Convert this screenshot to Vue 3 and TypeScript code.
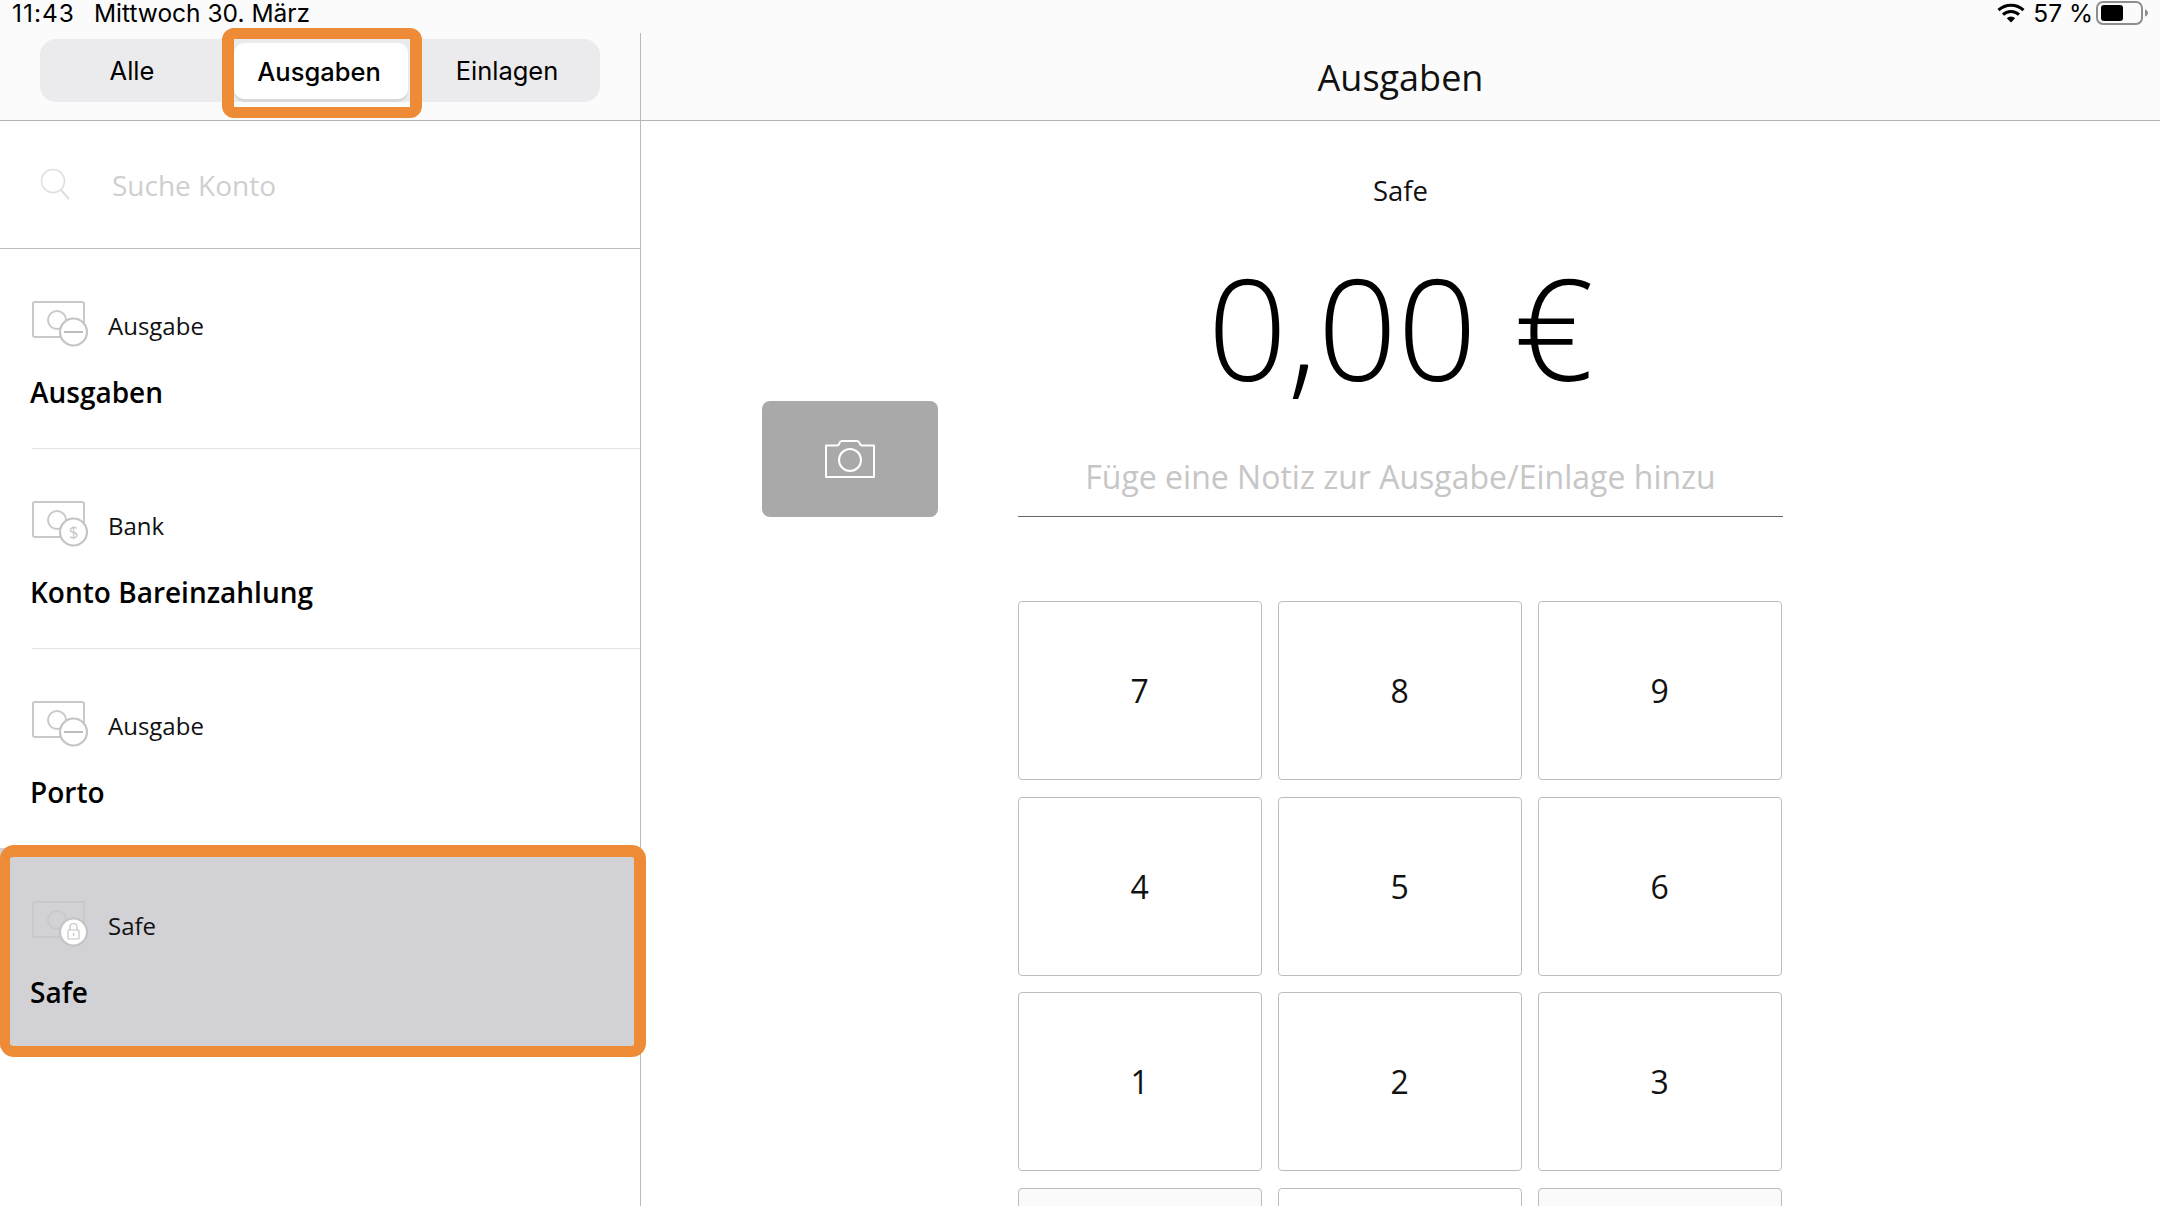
<template>
  <div class="page">
    <header class="status">
      <span class="time">11:43</span>
      <span class="date">Mittwoch 30. März</span>
      <span class="status-right">
        <svg class="wifi" width="28" height="20" viewBox="0 0 28 20">
          <path d="M1.5 7.2a18 18 0 0 1 25 0" fill="none" stroke="#000" stroke-width="3" />
          <path d="M6 11.6a11.6 11.6 0 0 1 16 0" fill="none" stroke="#000" stroke-width="3" />
          <path d="M14 19.6l-4.2-4.4a6 6 0 0 1 8.4 0z" fill="#000" />
        </svg>
        <span class="percent">57 %</span>
        <svg width="54" height="24" viewBox="0 0 54 24">
          <rect x="1" y="1" width="45" height="22" rx="6" fill="none" stroke="#8e8e8e" stroke-width="2" />
          <rect x="5" y="4" width="22" height="16" rx="3" fill="#000" />
          <path d="M49 8.5c2 .6 3 2 3 3.500s-1 2.900-3 3.500z" fill="#8e8e8e" />
        </svg>
      </span>
    </header>

    <div class="columns">
      <aside class="sidebar">
        <div class="sidebar-head">
          <div class="segments">
            <button
              v-for="tab in tabs"
              :key="tab"
              :class="['segment', { active: tab === activeTab }]"
            >
              {{ tab }}
            </button>
          </div>
        </div>

        <div class="search">
          <svg width="32" height="34" viewBox="0 0 32 34">
            <circle cx="13" cy="13" r="11.500" fill="none" stroke="#dedede" stroke-width="1.500" />
            <path d="M21 22l8 9" fill="none" stroke="#dedede" stroke-width="2" />
          </svg>
          <span class="search-text">Suche Konto</span>
        </div>

        <div
          v-for="account in accounts"
          :key="account.title"
          :class="['account', { selected: account.selected }]"
        >
          <div class="account-top">
            <svg class="account-icon" width="60" height="52" viewBox="0 -1 60 52">
              <rect x="3" y="2" width="51" height="35" rx="2" fill="none" stroke="#c9c9c9" stroke-width="2" />
              <circle cx="27" cy="20" r="9" fill="none" stroke="#c9c9c9" stroke-width="2" />
              <circle
                cx="43.500"
                cy="32"
                r="13.500"
                :fill="account.selected ? '#fff' : '#fff'"
                stroke="#c4c4c4"
                stroke-width="2.200"
              />
              <path v-if="account.kind === 'minus'" d="M34 32h19" stroke="#bdbdbd" stroke-width="2" />
              <text v-if="account.kind === 'bank'" x="43.500" y="38" class="dollar">$</text>
              <g v-if="account.kind === 'safe'" fill="none" stroke="#c4c4c4" stroke-width="1.200">
                <rect x="38" y="30" width="11" height="9" rx="1" />
                <path d="M40 30v-3a3.500 3.500 0 0 1 7 0v3" />
                <path d="M43.500 33v3" />
              </g>
            </svg>
            <span class="account-label">{{ account.label }}</span>
          </div>
          <div class="account-title">{{ account.title }}</div>
        </div>
      </aside>

      <main class="content">
        <div class="content-head">Ausgaben</div>
        <div class="content-body">
          <button class="camera">
            <svg width="54" height="40" viewBox="0 0 54 40">
              <path
                d="M3 6.500h11c1.500 0 2-1 2.500-2.500.4-1.200 1.200-2 2.500-2h15c1.300 0 2.100.8 2.500 2 .5 1.500 1 2.500 2.500 2.500h12v31.500H3z"
                fill="none"
                stroke="#fff"
                stroke-width="2"
                stroke-linejoin="round"
              />
              <circle cx="27" cy="21" r="11" fill="none" stroke="#fff" stroke-width="2" />
            </svg>
          </button>

          <div class="entry">
            <div class="entry-account">Safe</div>
            <div class="amount">0,00 €</div>
            <div class="note">Füge eine Notiz zur Ausgabe/Einlage hinzu</div>
            <div class="keypad">
              <button v-for="key in keys" :key="key.id" :class="['key', { muted: key.muted }]">
                {{ key.text }}
              </button>
            </div>
          </div>
        </div>
      </main>
    </div>
  </div>
</template>

<script setup lang="ts">
type Account = {
  label: string
  title: string
  kind: 'minus' | 'bank' | 'safe'
  selected?: boolean
}

const tabs = ['Alle', 'Ausgaben', 'Einlagen']
const activeTab = 'Ausgaben'

const accounts: Account[] = [
  { label: 'Ausgabe', title: 'Ausgaben', kind: 'minus' },
  { label: 'Bank', title: 'Konto Bareinzahlung', kind: 'bank' },
  { label: 'Ausgabe', title: 'Porto', kind: 'minus' },
  { label: 'Safe', title: 'Safe', kind: 'safe', selected: true },
]

const keys = [
  { id: 'k7', text: '7' },
  { id: 'k8', text: '8' },
  { id: 'k9', text: '9' },
  { id: 'k4', text: '4' },
  { id: 'k5', text: '5' },
  { id: 'k6', text: '6' },
  { id: 'k1', text: '1' },
  { id: 'k2', text: '2' },
  { id: 'k3', text: '3' },
  { id: 'a', text: '', muted: true },
  { id: 'k0', text: '' },
  { id: 'b', text: '', muted: true },
]
</script>

<style>
html,
body {
  margin: 0;
  background: #fff;
  overflow: hidden;
}
</style>

<style scoped>
.page {
  width: 2160px;
  height: 1206px;
  overflow: hidden;
  font-family: 'Open Sans', sans-serif;
  color: #111;
  background: #fff;
}

button {
  font-family: inherit;
  padding: 0;
  margin: 0;
  cursor: pointer;
}

.status {
  display: flex;
  align-items: center;
  height: 33px;
  padding: 0 10px 7px 12px;
  box-sizing: border-box;
  background: #fbfbfb;
  font-family: Inter, sans-serif;
  font-size: 24.500px;
  line-height: 24px;
  color: #000;
}

.time {
  letter-spacing: 1px;
}

.date {
  margin-left: 19px;
}

.status-right {
  margin-left: auto;
  display: flex;
  align-items: center;
}

.wifi {
  margin-right: 8px;
}

.percent {
  margin-right: 3px;
}

.columns {
  display: flex;
}

.sidebar {
  width: 641px;
  height: 1173px;
  box-sizing: border-box;
  border-right: 1px solid #b9b9b9;
  flex-shrink: 0;
}

.sidebar-head {
  height: 88px;
  box-sizing: border-box;
  padding: 6px 40px 0;
  border-bottom: 1px solid #b4b4b4;
  background: #fbfbfb;
}

.segments {
  display: flex;
  width: 560px;
  height: 63px;
  background: #ebebed;
  border-radius: 16px;
}

.segment {
  flex: 0 0 170px;
  border: 0;
  background: transparent;
  font-family: Inter, sans-serif;
  font-size: 25.500px;
  color: #000;
  position: relative;
}

.segment:first-child {
  flex-basis: 184px;
}

.segment.active {
  margin: 4px 14px 3px 10px;
  padding-right: 4px;
  flex-basis: 174px;
  box-sizing: border-box;
  background: #fff;
  border-radius: 10px;
  box-shadow: 0 3px 0 #d9d9d9;
  font-weight: 500;
}

.segment.active::after {
  content: '';
  position: absolute;
  left: -12px;
  right: -14px;
  top: -15px;
  bottom: -19px;
  border-width: 11px 12px;
  border-style: solid;
  border-color: #ee8b36;
  border-radius: 12px;
}

.search {
  display: flex;
  align-items: center;
  height: 128px;
  box-sizing: border-box;
  padding-left: 40px;
  padding-top: 1px;
  margin-bottom: -1px;
  border-bottom: 1px solid #bdbdbd;
}

.search-text {
  margin-left: 40px;
  font-size: 28px;
  color: #cfcfcf;
}

.account {
  position: relative;
  height: 200px;
  box-sizing: border-box;
  padding: 51px 0 0 30px;
}

.account + .account::before {
  content: '';
  position: absolute;
  left: 32px;
  right: 0;
  top: 0;
  border-top: 1px solid #e4e4e4;
}

.account.selected {
  background: #d1d1d6;
}

.account.selected::before {
  display: none;
}

.account.selected::after {
  content: '';
  position: absolute;
  left: 0;
  right: -6px;
  top: -3px;
  bottom: -9px;
  border-width: 12px 12px 11px 10px;
  border-style: solid;
  border-color: #ee8b36;
  border-radius: 14px;
}

.account-top {
  display: flex;
  align-items: center;
  height: 52px;
}

.account-icon {
  flex-shrink: 0;
}

.account-label {
  margin-left: 18px;
  font-size: 24px;
}

.dollar {
  font-family: 'Open Sans', sans-serif;
  font-size: 17px;
  fill: #c4c4c4;
  text-anchor: middle;
}

.account-title {
  margin-top: 22px;
  font-size: 28px;
  line-height: 38px;
  font-weight: 600;
  color: #000;
}

.content {
  flex: 1;
  min-width: 0;
}

.content-head {
  height: 88px;
  box-sizing: border-box;
  display: flex;
  align-items: center;
  justify-content: center;
  padding-top: 1px;
  border-bottom: 1px solid #b4b4b4;
  background: #fbfbfb;
  font-size: 36px;
}

.content-body {
  display: flex;
  padding-left: 121px;
}

.camera {
  flex: 0 0 176px;
  height: 116px;
  margin-top: 280px;
  border: 0;
  border-radius: 8px;
  background: #a9a9a9;
  display: flex;
  align-items: center;
  justify-content: center;
}

.entry {
  width: 765px;
  margin-left: 80px;
  text-align: center;
}

.entry-account {
  margin-top: 50px;
  font-size: 27.500px;
  line-height: 40px;
}

.amount {
  margin-top: 26px;
  margin-bottom: 26px;
  font-size: 140px;
  line-height: 180px;
  font-weight: 300;
  color: #000;
}

.note {
  height: 74px;
  box-sizing: border-box;
  padding-top: 12px;
  border-bottom: 1px solid #666;
  font-size: 32px;
  line-height: 44px;
  color: #c6c6c6;
}

.keypad {
  display: grid;
  grid-template-columns: repeat(3, 243.500px);
  grid-auto-rows: 179px;
  column-gap: 16.500px;
  row-gap: 16.500px;
  margin-top: 84px;
}

.key {
  border: 1px solid #bdbdbd;
  border-radius: 4px;
  background: #fff;
  font-size: 32px;
  color: #111;
}

.key.muted {
  background: #fafafa;
}
</style>
